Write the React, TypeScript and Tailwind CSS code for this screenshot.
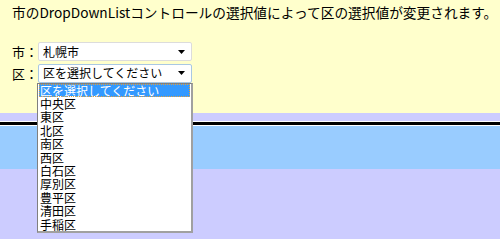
const wards = ['中央区', '東区', '北区', '南区', '西区', '白石区', '厚別区', '豊平区', '清田区', '手稲区'];

const Arrow = () => (
  <svg width="7" height="4" viewBox="0 0 7 4" className="shrink-0">
    <path d="M0 0h7L3.5 4z" fill="#000" />
  </svg>
);

const Select = ({ value, focused }: { value: string; focused?: boolean }) => (
  <div
    className={`w-[154px] h-[19px] flex items-center justify-between pl-[4px] pr-[6px] bg-white rounded-[2px] border ${
      focused ? 'border-[#a9c8e3]' : 'border-[#dcdcdc]'
    }`}
  >
    <span className="text-[12px] leading-none text-black">{value}</span>
    <Arrow />
  </div>
);

export default function App() {
  return (
    <div
      className="relative w-[500px] h-[239px] overflow-hidden bg-[#ccccff] text-black"
      style={{ fontFamily: '"Noto Sans CJK JP", "Noto Sans", sans-serif' }}
    >
      <div className="h-[113px] bg-[#ffffcc] pl-[12px] pt-[3px]">
        <p className="text-[13.7px] leading-[18px] whitespace-nowrap">
          市のDropDownListコントロールの選択値によって区の選択値が変更されます。
        </p>
        <div className="mt-[21px] flex flex-col gap-[2px]">
          <div className="flex items-center">
            <span className="w-[26px] text-[13px]">市：</span>
            <Select value="札幌市" />
          </div>
          <div className="flex items-center">
            <span className="w-[26px] text-[13px]">区：</span>
            <Select value="区を選択してください" focused />
          </div>
        </div>
      </div>
      <div className="h-[8px]" />
      <div className="h-[5px] border-y border-white bg-black" />
      <div className="h-[43px] bg-[#99ccff]" />

      {/* open dropdown list */}
      <div className="absolute left-[37px] top-[83px] w-[156px] bg-white border border-[#7f7f7f] border-r-[2px] border-b-[2px] border-r-[#a0a0a0] border-b-[#a0a0a0]">
        <div className="h-[13px] mx-[1px] bg-[#3399ff] text-white text-[12px] leading-[13px] pl-[1px] outline outline-1 outline-dotted outline-[#e0a040] -outline-offset-1">
          区を選択してください
        </div>
        {wards.map((w) => (
          <div key={w} className="h-[13.4px] text-[12px] leading-[13.4px] pl-[2px]">
            {w}
          </div>
        ))}
      </div>
    </div>
  );
}
